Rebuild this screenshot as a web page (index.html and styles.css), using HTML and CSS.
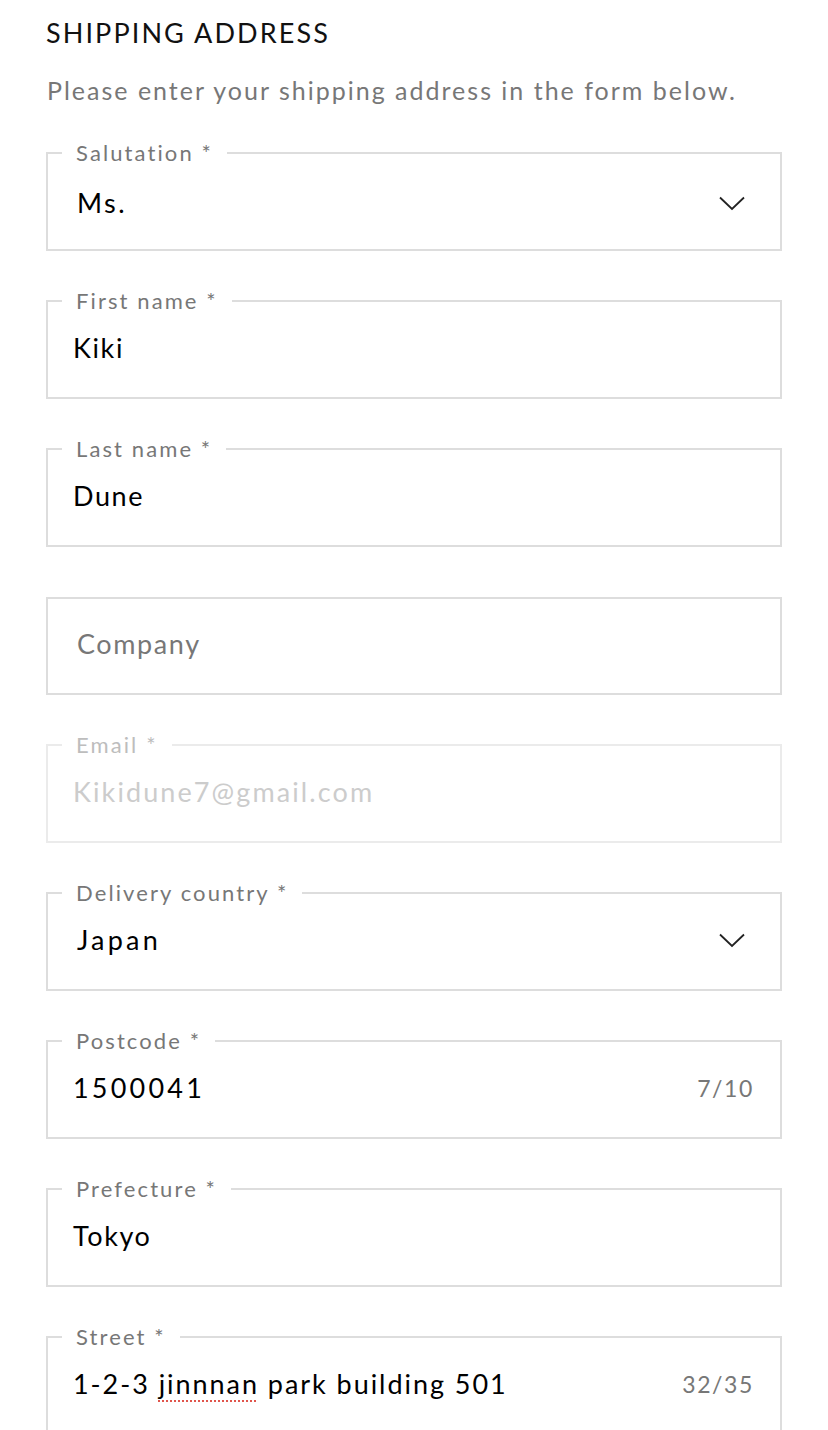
FILE: index.html
```html
<!DOCTYPE html>
<html lang="en">
<head>
<meta charset="utf-8">
<title>Shipping address</title>
<link rel="stylesheet" href="styles.css">
</head>
<body>
<main class="page">
  <h1 class="title">SHIPPING ADDRESS</h1>
  <p class="intro">Please enter your shipping address in the form below.</p>

  <fieldset class="field field-select field-first">
    <legend class="label">Salutation *</legend>
    <div class="control">
      <span class="value value-select">Ms.</span>
      <svg class="chevron" width="26" height="15" viewBox="0 0 26 15" aria-hidden="true"><path d="M1 1.5 L13 13 L25 1.5" fill="none" stroke="#222" stroke-width="1.8"/></svg>
    </div>
  </fieldset>

  <fieldset class="field">
    <legend class="label">First name *</legend>
    <div class="control"><span class="value">Kiki</span></div>
  </fieldset>

  <fieldset class="field">
    <legend class="label">Last name *</legend>
    <div class="control"><span class="value">Dune</span></div>
  </fieldset>

  <fieldset class="field field-nolabel">
    <div class="control"><span class="value placeholder">Company</span></div>
  </fieldset>

  <fieldset class="field field-disabled">
    <legend class="label">Email *</legend>
    <div class="control"><span class="value value-email">Kikidune7@gmail.com</span></div>
  </fieldset>

  <fieldset class="field field-select">
    <legend class="label">Delivery country *</legend>
    <div class="control">
      <span class="value value-select value-country">Japan</span>
      <svg class="chevron" width="26" height="15" viewBox="0 0 26 15" aria-hidden="true"><path d="M1 1.5 L13 13 L25 1.5" fill="none" stroke="#222" stroke-width="1.8"/></svg>
    </div>
  </fieldset>

  <fieldset class="field field-count">
    <legend class="label">Postcode *</legend>
    <div class="control"><span class="value value-digits">1500041</span><span class="counter">7/10</span></div>
  </fieldset>

  <fieldset class="field">
    <legend class="label">Prefecture *</legend>
    <div class="control"><span class="value">Tokyo</span></div>
  </fieldset>

  <fieldset class="field field-count">
    <legend class="label">Street *</legend>
    <div class="control"><span class="value value-street">1-2-3 <span class="misspelled">jinnnan</span> park building 501</span><span class="counter">32/35</span></div>
  </fieldset>
</main>
</body>
</html>
```

FILE: styles.css
```css
* { box-sizing: border-box; }

html, body {
  margin: 0;
  padding: 0;
  background: #ffffff;
}

body {
  font-family: "Lato", "Liberation Sans", sans-serif;
  color: #000;
}

.page {
  padding: 17px 46px 0 46px;
  width: 828px;
}

.title {
  margin: 0;
  font-size: 27px;
  line-height: 32px;
  font-weight: 400;
  letter-spacing: 2.1px;
  color: #111;
}

.intro {
  margin: 25px 0 35px 1px;
  font-size: 25px;
  line-height: 32px;
  letter-spacing: 2px;
  color: #777;
  white-space: nowrap;
}

.field {
  margin: 0 0 38px 0;
  padding: 0;
  min-width: 0;
  width: 736px;
  border: 2px solid #dddddd;
}

.field-nolabel {
  margin-top: 50px;
}

.label {
  margin-left: 14px;
  padding: 0 14px;
  font-size: 22px;
  line-height: 24px;
  letter-spacing: 2.1px;
  color: #777;
}

.control {
  display: flex;
  align-items: center;
  justify-content: space-between;
  height: 84px;
  padding: 17px 26px 31px 25px;
}

.field-nolabel .control {
  height: 94px;
  padding: 27px 26px 31px 29px;
}

.field-first .control {
  padding-top: 20px;
  padding-bottom: 28px;
}

.value {
  font-size: 27px;
  line-height: 36px;
  letter-spacing: 1.6px;
  color: #000;
  white-space: nowrap;
}

.value-select {
  padding-left: 4px;
  letter-spacing: 2.4px;
}

.value-country {
  padding-left: 4px;
  letter-spacing: 3.2px;
}

.value-email {
  letter-spacing: 2.1px;
}

.value-digits {
  letter-spacing: 3.2px;
}

.placeholder {
  color: #777;
}

.value-street {
  letter-spacing: 1.95px;
}

.misspelled {
  text-decoration: underline dotted #e0554c;
  text-decoration-thickness: 2px;
  text-underline-offset: 6px;
}

.chevron {
  display: block;
  margin-right: 9px;
}

.counter {
  font-size: 23px;
  line-height: 36px;
  letter-spacing: 1.6px;
  color: #777;
}

.field-disabled {
  border-color: #ebebeb;
}

.field-disabled .label {
  color: #bdbdbd;
}

.field-disabled .value {
  color: #cccccc;
}
```
